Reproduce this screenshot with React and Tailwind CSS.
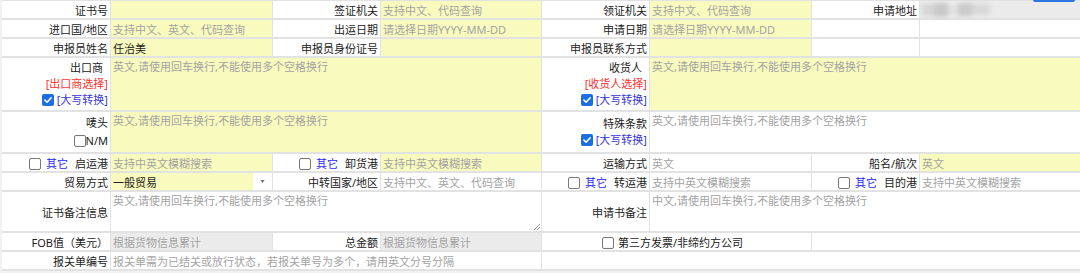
const YELLOW = 'bg-[#f9fbbe]';
const WHITE = 'bg-white';
const GRAY = 'bg-[#ebebeb]';

function Box({ checked }) {
  if (checked) {
    return (
      <span className="inline-flex h-[12px] w-[12px] shrink-0 items-center justify-center rounded-[2px] bg-[#1b6fe3]">
        <svg viewBox="0 0 12 12" className="h-[10px] w-[10px]">
          <path d="M2.3 6.2 L4.9 8.7 L9.8 3.3" fill="none" stroke="white" strokeWidth="1.9" strokeLinecap="round" strokeLinejoin="round" />
        </svg>
      </span>
    );
  }
  return <span className="inline-block h-[12px] w-[12px] shrink-0 rounded-[2px] border border-[#777] bg-white" />;
}

function Label({ children, className = '' }) {
  return (
    <div className={`flex items-center justify-end bg-white pr-[2px] pt-[2px] text-[#222] whitespace-nowrap ${className}`}>
      {children}
    </div>
  );
}

function Field({ tone = YELLOW, placeholder, value, className = '' }) {
  return (
    <div className={`flex items-center pl-[2px] pt-[2px] whitespace-nowrap overflow-hidden ${tone} ${className}`}>
      {value ? <span className="text-[#222]">{value}</span> : <span className="text-[#a3a3a3]">{placeholder}</span>}
    </div>
  );
}

function Area({ tone = YELLOW, placeholder, className = '', children }) {
  return (
    <div className={`relative pl-[2px] pt-[1px] text-[#a3a3a3] ${tone} ${className}`}>
      {placeholder}
      {children}
    </div>
  );
}

function OtherLabel({ text }) {
  return (
    <Label>
      <Box />
      <span className="ml-[5px] text-[#1f1fff]">其它</span>
      <span className="ml-[7px]">{text}</span>
    </Label>
  );
}

const EN_AREA = '英文,请使用回车换行,不能使用多个空格换行';

export default function App() {
  return (
    <div className="relative h-[273px] w-[1080px] overflow-hidden bg-[#f1f1f1] pl-[2px] text-[11px] leading-[16px]" style={{ fontFamily: '"Noto Sans", "Noto Sans CJK SC", sans-serif' }}>
      {/* button edge peeking in from above */}
      <div className="absolute left-[1033px] top-0 h-[2px] w-[42px] rounded-b-[2px] bg-[#2b78e0]" />

      <div className="grid grid-cols-[108px_161px_107px_160px_107px_161px_107px_160px] grid-rows-[17px_17px_17px_52px_40px_17px_17px_39px_17px_17px] gap-x-px gap-y-[2px] bg-[#e2e2e2] pt-[1px] pb-[2px]">
        {/* row 1 */}
        <Label>证书号</Label>
        <Field />
        <Label>签证机关</Label>
        <Field placeholder="支持中文、代码查询" />
        <Label>领证机关</Label>
        <Field placeholder="支持中文、代码查询" />
        <Label>申请地址</Label>
        <div className={`flex items-center pl-[2px] ${GRAY}`}>
          <div className="flex h-[14px] items-center blur-[2px]">
            <span className="h-[12px] w-[12px] bg-[#d6d6d6]" />
            <span className="h-[14px] w-[14px] bg-[#c9c9c9]" />
            <span className="h-[10px] w-[10px] bg-[#e0e0e0]" />
            <span className="h-[13px] w-[14px] bg-[#cbcbcb]" />
            <span className="h-[11px] w-[18px] bg-[#d9d9d9]" />
          </div>
        </div>

        {/* row 2 */}
        <Label>进口国/地区</Label>
        <Field placeholder="支持中文、英文、代码查询" />
        <Label>出运日期</Label>
        <Field placeholder="请选择日期YYYY-MM-DD" />
        <Label>申请日期</Label>
        <Field placeholder="请选择日期YYYY-MM-DD" />
        <div className={WHITE} />
        <div className={WHITE} />

        {/* row 3 */}
        <Label>申报员姓名</Label>
        <Field value="任治美" />
        <Label>申报员身份证号</Label>
        <Field />
        <Label>申报员联系方式</Label>
        <Field />
        <div className={WHITE} />
        <div className={WHITE} />

        {/* row 4 */}
        <div className="flex flex-col items-end justify-center bg-white pr-[2px] text-[#222]">
          <span className="pr-[5px]">出口商</span>
          <span className="text-[#ff3030]">[出口商选择]</span>
          <span className="flex items-center gap-[3px] text-[#3737d8]">
            <Box checked />
            [大写转换]
          </span>
        </div>
        <Area placeholder={EN_AREA} className="col-span-3" />
        <div className="flex flex-col items-end justify-center bg-white pr-[2px] text-[#222]">
          <span className="pr-[5px]">收货人</span>
          <span className="text-[#ff3030]">[收货人选择]</span>
          <span className="flex items-center gap-[3px] text-[#3737d8]">
            <Box checked />
            [大写转换]
          </span>
        </div>
        <Area placeholder={EN_AREA} className="col-span-3" />

        {/* row 5 */}
        <div className="flex flex-col items-end justify-center gap-[2px] bg-white pr-[2px] text-[#222]">
          <span>唛头</span>
          <span className="flex items-center">
            <Box />
            N/M
          </span>
        </div>
        <Area placeholder={EN_AREA} className="col-span-3" />
        <div className="flex flex-col items-end justify-center bg-white pr-[2px] text-[#222]">
          <span>特殊条款</span>
          <span className="flex items-center gap-[3px] text-[#3737d8]">
            <Box checked />
            [大写转换]
          </span>
        </div>
        <Area tone={WHITE} placeholder={EN_AREA} className="col-span-3" />

        {/* row 6 */}
        <OtherLabel text="启运港" />
        <Field placeholder="支持中英文模糊搜索" />
        <OtherLabel text="卸货港" />
        <Field placeholder="支持中英文模糊搜索" />
        <Label>运输方式</Label>
        <Field tone={WHITE} placeholder="英文" />
        <Label>船名/航次</Label>
        <Field placeholder="英文" />

        {/* row 7 */}
        <Label>贸易方式</Label>
        <div className="flex bg-white">
          <div className={`flex flex-1 items-center pl-[2px] pt-[2px] text-[#222] ${YELLOW}`}>一般贸易</div>
          <div className="flex w-[19px] items-center justify-center">
            <svg viewBox="0 0 6 4" className="h-[3px] w-[5px]">
              <path d="M0 0 H6 L3 4 Z" fill="#777" />
            </svg>
          </div>
        </div>
        <Label>中转国家/地区</Label>
        <Field tone={WHITE} placeholder="支持中文、英文、代码查询" />
        <OtherLabel text="转运港" />
        <Field tone={WHITE} placeholder="支持中英文模糊搜索" />
        <OtherLabel text="目的港" />
        <Field tone={WHITE} placeholder="支持中英文模糊搜索" />

        {/* row 8 */}
        <Label>证书备注信息</Label>
        <Area tone={WHITE} placeholder={EN_AREA} className="col-span-3">
          <svg viewBox="0 0 7 7" className="absolute bottom-[1px] right-[1px] h-[7px] w-[7px]">
            <path d="M1 7 L7 1 M4 7 L7 4" stroke="#8a8a8a" strokeWidth="0.9" />
          </svg>
        </Area>
        <Label>申请书备注</Label>
        <Area tone={WHITE} placeholder="中文,请使用回车换行,不能使用多个空格换行" className="col-span-3" />

        {/* row 9 */}
        <Label>FOB值（美元）</Label>
        <Field tone={GRAY} placeholder="根据货物信息累计" />
        <Label>总金额</Label>
        <Field tone={GRAY} placeholder="根据货物信息累计" />
        <div className="col-span-2 flex items-center justify-center gap-[4px] bg-white pr-[8px] pt-[2px] text-[#222]">
          <Box />
          第三方发票/非缔约方公司
        </div>
        <div className="col-span-2 bg-white" />

        {/* row 10 */}
        <Label>报关单编号</Label>
        <Field tone={WHITE} placeholder="报关单需为已结关或放行状态，若报关单号为多个，请用英文分号分隔" className="col-span-3" />
        <div className="col-span-4 bg-white" />
      </div>
    </div>
  );
}
